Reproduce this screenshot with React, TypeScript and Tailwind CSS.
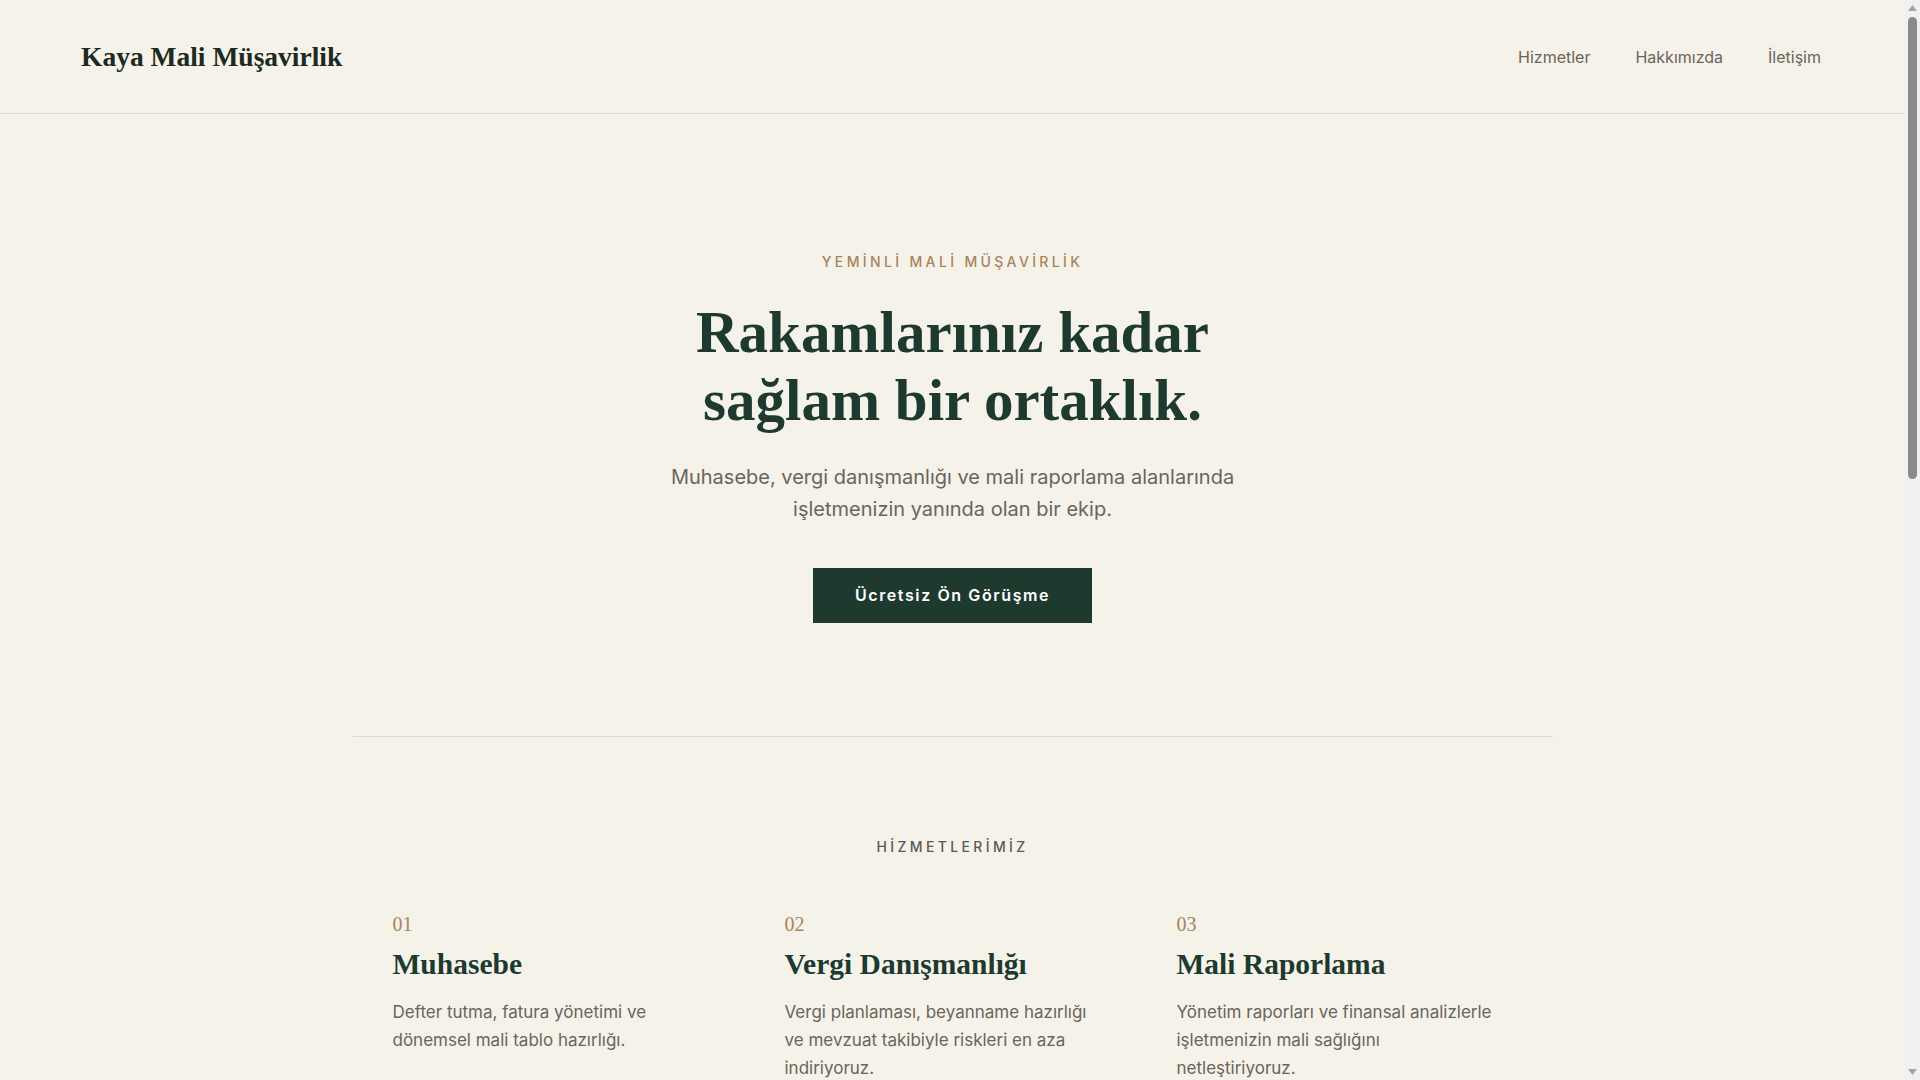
import React from 'react';

const services = [
  {
    no: '01',
    title: 'Muhasebe',
    text: 'Defter tutma, fatura yönetimi ve dönemsel mali tablo hazırlığı.',
  },
  {
    no: '02',
    title: 'Vergi Danışmanlığı',
    text: 'Vergi planlaması, beyanname hazırlığı ve mevzuat takibiyle riskleri en aza indiriyoruz.',
  },
  {
    no: '03',
    title: 'Mali Raporlama',
    text: 'Yönetim raporları ve finansal analizlerle işletmenizin mali sağlığını netleştiriyoruz.',
  },
];

const navItems = ['Hizmetler', 'Hakkımızda', 'İletişim'];

export default function App() {
  return (
    <div className="flex h-screen bg-[#f5f2ea] font-['Inter',sans-serif] text-[#1e3a2f]">
      <main className="flex-1 overflow-y-auto">
        {/* Header */}
        <header className="border-b border-[#ddd8cb]">
          <div className="flex h-[113px] items-center justify-between pl-[81px] pr-[84px]">
            <a href="#" className="font-['Liberation_Serif',serif] text-[27.5px] font-bold text-[#1c2a22]">
              Kaya Mali Müşavirlik
            </a>
            <nav className="flex items-center gap-[45px]">
              {navItems.map((item) => (
                <a key={item} href={`#${item}`} className="text-[16px] text-[#6b645c]">
                  {item}
                </a>
              ))}
            </nav>
          </div>
        </header>

        {/* Hero */}
        <section className="flex flex-col items-center pt-[138px] pb-[113px] text-center">
          <p className="text-[14px] font-medium leading-5 tracking-[0.24em] text-[#a8845a]">
            YEMİNLİ MALİ MÜŞAVİRLİK
          </p>
          <h1 className="mt-[26px] font-['Liberation_Serif',serif] text-[59px] font-bold leading-[68px] text-[#1e3a2f]">
            Rakamlarınız kadar
            <br />
            sağlam bir ortaklık.
          </h1>
          <p className="mt-[27px] text-[20px] leading-[32px] text-[#6b645c]">
            Muhasebe, vergi danışmanlığı ve mali raporlama alanlarında
            <br />
            işletmenizin yanında olan bir ekip.
          </p>
          <a
            href="#iletisim"
            className="mt-[43px] bg-[#1e3a2f] px-[42px] py-[17px] text-[16px] font-semibold leading-[21px] tracking-[0.1em] text-white"
          >
            Ücretsiz Ön Görüşme
          </a>
        </section>

        <div className="mx-auto max-w-[1200px] border-t border-[#ddd8cb]" />

        {/* Services */}
        <section id="Hizmetler" className="mx-auto max-w-[1200px] px-10 pt-[100px] pb-[120px]">
          <p className="text-center text-[14px] font-medium leading-5 tracking-[0.24em] text-[#5c5852]">
            HİZMETLERİMİZ
          </p>
          <div className="mt-[55px] grid grid-cols-3 gap-14">
            {services.map((s) => (
              <div key={s.no}>
                <div className="font-['Liberation_Serif',serif] text-[20px] leading-6 text-[#a8845a]">{s.no}</div>
                <h3 className="mt-[11px] font-['Liberation_Serif',serif] text-[29.5px] font-bold leading-[34px] text-[#1e3a2f]">
                  {s.title}
                </h3>
                <p className="mt-[17px] max-w-[322px] text-[17px] leading-[28px] text-[#6b645c]">{s.text}</p>
              </div>
            ))}
          </div>
        </section>

        {/* About */}
        <section id="Hakkımızda" className="border-t border-[#ddd8cb] py-[110px]">
          <div className="mx-auto grid max-w-[1200px] grid-cols-2 gap-16 px-10">
            <div>
              <p className="text-[14px] font-medium tracking-[0.24em] text-[#a8845a]">HAKKIMIZDA</p>
              <h2 className="mt-5 font-['Liberation_Serif',serif] text-[40px] font-bold leading-[48px]">
                Yirmi yılı aşkın deneyim, kişisel ilgi.
              </h2>
            </div>
            <p className="text-[17px] leading-[1.8] text-[#6b645c]">
              Küçük ve orta ölçekli işletmelere, şeffaf ve güvenilir mali müşavirlik hizmeti sunuyoruz. Her müşterimizle
              birebir ilgileniyor, mevzuattaki değişiklikleri sizin yerinize takip ediyoruz.
            </p>
          </div>
        </section>

        {/* Contact */}
        <section id="İletişim" className="bg-[#1e3a2f] py-[100px] text-center text-white">
          <h2 className="font-['Liberation_Serif',serif] text-[40px] font-bold">Görüşmek ister misiniz?</h2>
          <p className="mt-4 text-[17px] text-[#d7d2c4]">info@kayamalimusavirlik.com · +90 212 000 00 00</p>
        </section>

        <footer className="py-8 text-center text-[14px] text-[#6b645c]">© 2024 Kaya Mali Müşavirlik</footer>
      </main>

      {/* scroll track */}
      <div className="flex w-[15px] flex-col items-center bg-[#f1f1f1] py-[3px]">
        <svg width="9" height="6" viewBox="0 0 9 6" className="mt-[2px]">
          <path d="M4.5 0 L9 6 L0 6 Z" fill="#a3a3a3" />
        </svg>
        <div className="mt-[6px] h-[462px] w-[9px] rounded-full bg-[#8b8b8b]" />
        <div className="flex-1" />
        <svg width="9" height="6" viewBox="0 0 9 6" className="mb-[2px]">
          <path d="M0 0 L9 0 L4.5 6 Z" fill="#a3a3a3" />
        </svg>
      </div>
    </div>
  );
}
